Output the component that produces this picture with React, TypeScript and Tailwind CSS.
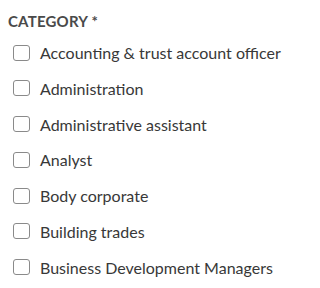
import React from "react";

const items = [
  "Accounting & trust account officer",
  "Administration",
  "Administrative assistant",
  "Analyst",
  "Body corporate",
  "Building trades",
  "Business Development Managers",
];

export default function App() {
  return (
    <div className="w-[288px] h-[288px] bg-white overflow-hidden pl-[8px] pt-[12px]" style={{ fontFamily: "Lato, sans-serif" }}>
      <div className="text-[15px] font-bold text-[#4a4a4a] leading-[18px] tracking-[0.2px]">CATEGORY *</div>
      <div className="flex flex-col gap-[18.8px] mt-[14px] pl-[5px]">
        {items.map((t) => (
          <label key={t} className="flex items-center gap-[10px] h-[17px]">
            <span className="w-[17px] h-[16px] border border-[#8a8a8a] rounded-[3px] shrink-0" />
            <span className="text-[16px] text-[#383838] leading-[17px] whitespace-nowrap">{t}</span>
          </label>
        ))}
      </div>
    </div>
  );
}
